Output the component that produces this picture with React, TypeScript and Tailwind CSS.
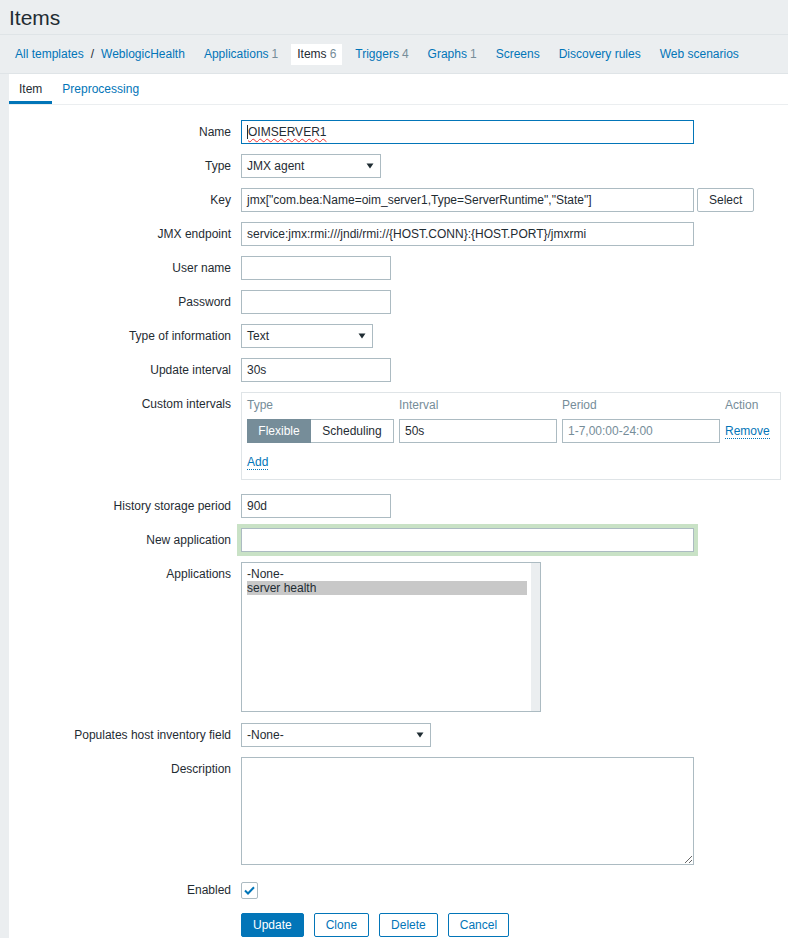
import React from "react";

const font = "font-['Liberation_Sans',Arial,sans-serif]";

function Arrow() {
  return (
    <svg width="8" height="6" viewBox="0 0 8 6" className="shrink-0">
      <path d="M0.5 0.5 H7.5 L4 5.5 Z" fill="#1f2c33" />
    </svg>
  );
}

function TextBox({ value = "", width, className = "" }: { value?: string; width: string; className?: string }) {
  return (
    <div
      className={`h-[24px] ${width} border border-[#acbbc2] bg-white px-[5px] flex items-center whitespace-nowrap overflow-hidden ${className}`}
    >
      {value}
    </div>
  );
}

function Select({ value, width }: { value: string; width: string }) {
  return (
    <div className={`h-[24px] ${width} border border-[#acbbc2] bg-white pl-[5px] pr-[6px] flex items-center justify-between`}>
      <span>{value}</span>
      <Arrow />
    </div>
  );
}

function Row({ label, children, className = "" }: { label: string; children: React.ReactNode; className?: string }) {
  return (
    <div className={`flex gap-[10px] ${className}`}>
      <div className="w-[222px] shrink-0 text-right leading-[24px]">{label}</div>
      <div className="flex items-start gap-[3px]">{children}</div>
    </div>
  );
}

function NavLink({ label, count }: { label: string; count?: number }) {
  return (
    <span className="text-[#0275b8]">
      {label}
      {count !== undefined && <span className="text-[#768d99] ml-[3px]">{count}</span>}
    </span>
  );
}

export default function App() {
  return (
    <div className={`${font} min-h-[938px] bg-[#ebeef0] text-[12px] text-[#1f2c33]`}>
      <div className="h-[35px] px-[9px] flex items-center border-b border-[#dfe4e7]">
        <h1 className="text-[21px] leading-none">Items</h1>
      </div>

      <div className="h-[39px] flex items-center pl-[15px] border-b border-[#dfe4e7]">
        <span className="text-[#0275b8]">All templates</span>
        <span className="mx-[7px] text-[#1f2c33]">/</span>
        <span className="text-[#0275b8] mr-[19px]">WeblogicHealth</span>
        <div className="flex items-center gap-[19px]">
          <NavLink label="Applications" count={1} />
          <span className="bg-white px-[6px] h-[21px] flex items-center -mx-[6px]">
            <span>Items</span>
            <span className="text-[#768d99] ml-[3px]">6</span>
          </span>
          <NavLink label="Triggers" count={4} />
          <NavLink label="Graphs" count={1} />
          <NavLink label="Screens" />
          <NavLink label="Discovery rules" />
          <NavLink label="Web scenarios" />
        </div>
      </div>

      <div className="ml-[9px] bg-white pb-[2px]">
        <div className="flex h-[31px] border-b border-[#ebeef0]">
          <div className="px-[10px] flex items-center border-b-[3px] border-[#0275b8] pt-[3px]">Item</div>
          <div className="px-[10px] flex items-center text-[#0275b8]">Preprocessing</div>
        </div>

        <div className="pt-[15px] flex flex-col gap-[10px]">
          <Row label="Name">
            <div className="h-[24px] w-[453px] border border-[#0275b8] bg-white px-[5px] flex items-center">
              <span className="w-px h-[14px] bg-[#1f2c33]" />
              <span className="underline decoration-wavy decoration-[#e33] decoration-1 underline-offset-2">OIMSERVER1</span>
            </div>
          </Row>
          <Row label="Type">
            <Select value="JMX agent" width="w-[140px]" />
          </Row>
          <Row label="Key">
            <TextBox value={'jmx["com.bea:Name=oim_server1,Type=ServerRuntime","State"]'} width="w-[453px]" />
            <div className="h-[24px] px-[11px] border border-[#acbbc2] rounded-[2px] flex items-center bg-white">Select</div>
          </Row>
          <Row label="JMX endpoint">
            <TextBox value="service:jmx:rmi:///jndi/rmi://{HOST.CONN}:{HOST.PORT}/jmxrmi" width="w-[453px]" />
          </Row>
          <Row label="User name">
            <TextBox width="w-[150px]" />
          </Row>
          <Row label="Password">
            <TextBox width="w-[150px]" />
          </Row>
          <Row label="Type of information">
            <Select value="Text" width="w-[132px]" />
          </Row>
          <Row label="Update interval">
            <TextBox value="30s" width="w-[150px]" />
          </Row>
          <Row label="Custom intervals" className="mb-[4px]">
            <div className="w-[540px] border border-[#dfe4e7] px-[5px] pt-[4px] pb-[9px]">
              <div className="grid grid-cols-[147px_158px_158px_1fr] gap-x-[5px] text-[#768d99] leading-[16px]">
                <span>Type</span>
                <span>Interval</span>
                <span>Period</span>
                <span>Action</span>
              </div>
              <div className="grid grid-cols-[147px_158px_158px_1fr] gap-x-[5px] mt-[6px] items-center">
                <div className="flex h-[24px]">
                  <div className="w-[64px] bg-[#768d99] text-white flex items-center justify-center border border-[#768d99]">Flexible</div>
                  <div className="flex-1 border border-l-0 border-[#acbbc2] flex items-center justify-center">Scheduling</div>
                </div>
                <TextBox value="50s" width="w-[158px]" />
                <TextBox value="1-7,00:00-24:00" width="w-[158px]" className="text-[#768d99]" />
                <span className="text-[#0275b8] border-b border-dotted border-[#0275b8] leading-[14px] w-fit">Remove</span>
              </div>
              <div className="mt-[11px] leading-[16px]">
                <span className="text-[#0275b8] border-b border-dotted border-[#0275b8]">Add</span>
              </div>
            </div>
          </Row>
          <Row label="History storage period">
            <TextBox value="90d" width="w-[150px]" />
          </Row>
          <Row label="New application">
            <TextBox width="w-[453px]" className="shadow-[0_0_0_4px_#c9e2c6]" />
          </Row>
          <Row label="Applications">
            <div className="w-[300px] h-[150px] border border-[#acbbc2] flex">
              <div className="flex-1 pt-[4px] pl-[5px] pr-[4px] leading-[14px]">
                <div>-None-</div>
                <div className="bg-[#c8c8c8]">server health</div>
              </div>
              <div className="w-[9px] bg-[#ebeef0]" />
            </div>
          </Row>
          <Row label="Populates host inventory field" className="mt-[1px]">
            <Select value="-None-" width="w-[190px]" />
          </Row>
          <Row label="Description">
            <textarea
              readOnly
              className="w-[453px] h-[108px] border border-[#acbbc2] bg-white block outline-none"
            />
          </Row>
          <Row label="Enabled" className="mt-[3px]">
            <div className="h-[24px] flex items-center">
              <div className="w-[17px] h-[17px] border border-[#acbbc2] rounded-[2px] flex items-center justify-center">
                <svg width="11" height="9" viewBox="0 0 11 9">
                  <path d="M1 4.5 L4 7.5 L10 1.2" stroke="#0275b8" strokeWidth="2" fill="none" />
                </svg>
              </div>
            </div>
          </Row>
          <div className="flex gap-[10px] mt-[1px]">
            <div className="w-[222px] shrink-0" />
            <div className="flex gap-[10px]">
              <div className="h-[24px] px-[11px] bg-[#0275b8] border border-[#0275b8] text-white rounded-[2px] flex items-center">Update</div>
              <div className="h-[24px] px-[11px] border border-[#0275b8] text-[#0275b8] rounded-[2px] flex items-center">Clone</div>
              <div className="h-[24px] px-[11px] border border-[#0275b8] text-[#0275b8] rounded-[2px] flex items-center">Delete</div>
              <div className="h-[24px] px-[11px] border border-[#0275b8] text-[#0275b8] rounded-[2px] flex items-center">Cancel</div>
            </div>
          </div>
        </div>
      </div>
    </div>
  );
}
